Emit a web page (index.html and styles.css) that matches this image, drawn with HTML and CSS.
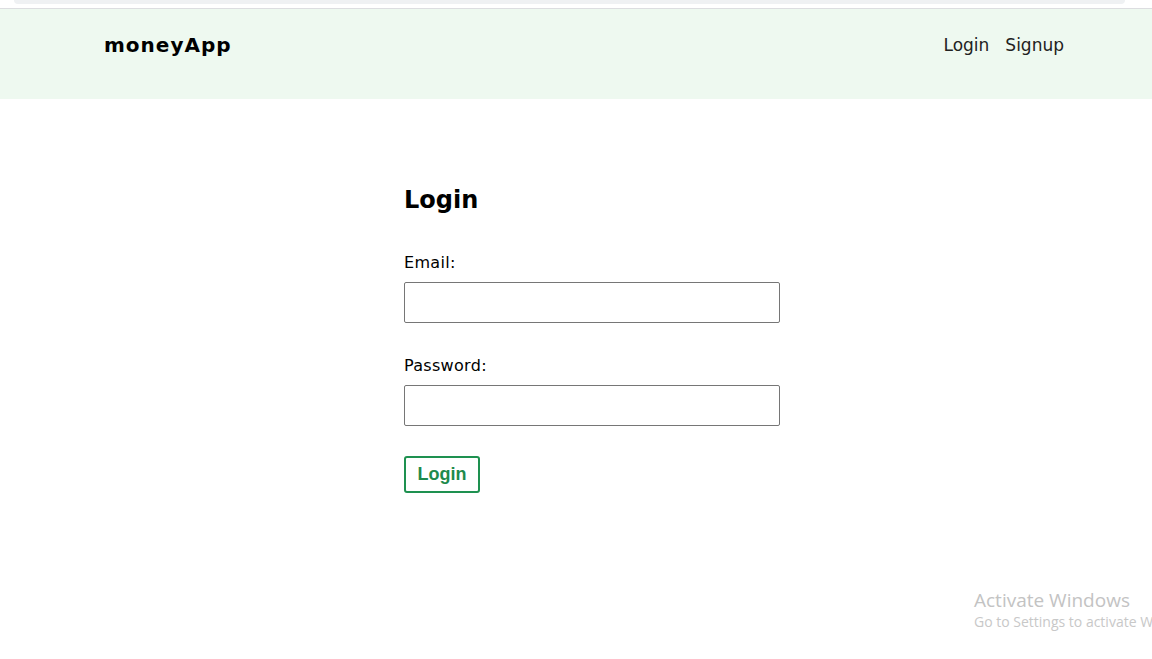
FILE: index.html
```html
<!DOCTYPE html>
<html lang="en">
<head>
    <meta charset="UTF-8">
    <meta name="viewport" content="width=device-width, initial-scale=1.0">
    <title>moneyApp - Login</title>
    <link rel="stylesheet" href="styles.css">
</head>
<body>
    <div class="topstrip"><div class="tab"></div></div>

    <nav class="navbar">
        <a href="/" class="brand">moneyApp</a>
        <div class="nav-links">
            <a href="/login">Login</a>
            <a href="/signup">Signup</a>
        </div>
    </nav>

    <main class="login">
        <h2>Login</h2>
        <form>
            <label for="email">Email:</label>
            <input type="email" id="email" name="email">

            <label for="password">Password:</label>
            <input type="password" id="password" name="password">

            <button type="submit">Login</button>
        </form>
    </main>

    <div class="activate">
        <p class="activate-title">Activate Windows</p>
        <p class="activate-sub">Go to Settings to activate Windows.</p>
    </div>
</body>
</html>
```

FILE: styles.css
```css
* {
    margin: 0;
    padding: 0;
    box-sizing: border-box;
}

body {
    font-family: "DejaVu Sans", sans-serif;
    background: #fff;
    color: #000;
    overflow: hidden;
    height: 659px;
}

/* thin browser strip above the page */
.topstrip {
    height: 9px;
    background: #fff;
    border-bottom: 1px solid #dcdde0;
    padding: 0 27px 0 14px;
}

.topstrip .tab {
    height: 4px;
    background: #eff1f3;
    border-radius: 0 0 8px 8px;
}

.navbar {
    height: 90px;
    background: #eef9f0;
    display: flex;
    align-items: flex-start;
    justify-content: space-between;
    padding: 24px 88px 0 104px;
    line-height: 24px;
}

.brand {
    font-size: 20px;
    font-weight: bold;
    letter-spacing: 1px;
    color: #000;
    text-decoration: none;
}

.nav-links {
    display: flex;
    gap: 16px;
}

.nav-links a {
    font-size: 17px;
    color: #222;
    text-decoration: none;
}

.login {
    width: 376px;
    margin-left: 404px;
    padding-top: 84px;
}

.login h2 {
    font-size: 24px;
    line-height: 34px;
    font-weight: bold;
}

.login label {
    display: block;
    font-size: 16px;
    line-height: 24px;
    letter-spacing: 0.3px;
    margin-top: 34px;
}

.login input + label {
    margin-top: 31px;
}

.login input {
    display: block;
    width: 376px;
    height: 41px;
    margin-top: 7px;
    border: 1px solid #767676;
    border-radius: 2px;
    padding: 0 8px;
    font-size: 16px;
}

.login button {
    display: block;
    margin-top: 30px;
    width: 76px;
    height: 37px;
    background: #fff;
    border: 2px solid #1e9150;
    border-radius: 3px;
    color: #1e8a4c;
    font-family: "Liberation Sans", Arial, sans-serif;
    font-size: 18px;
    font-weight: bold;
    cursor: pointer;
}

/* OS watermark in the corner */
.activate {
    position: absolute;
    left: 974px;
    top: 588px;
    white-space: nowrap;
    color: #c3c3c3;
    font-family: "Open Sans", sans-serif;
}

.activate-title {
    font-size: 19px;
    line-height: 24px;
}

.activate-sub {
    font-size: 14px;
    line-height: 20px;
    color: #c8c8c8;
}
```
